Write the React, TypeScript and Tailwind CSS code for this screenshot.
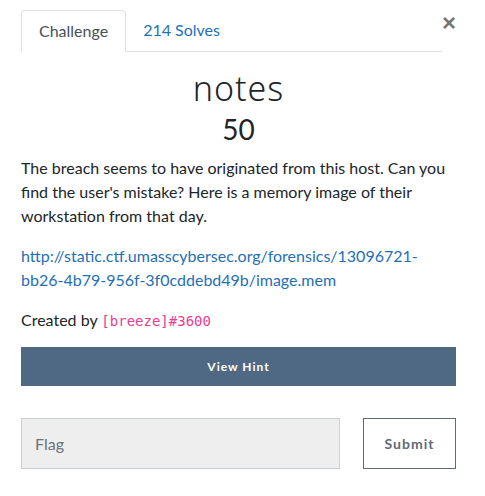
export default function App() {
  return (
    <div className="w-[485px] h-[496px] bg-white font-['Lato','Liberation_Sans',sans-serif] text-[#212529]">
      <div className="pl-[21px] pr-[29px] pt-[10px]">
        <div className="flex items-start">
          <div className="flex w-[421px] border-b border-[#dee2e6]">
            <div className="-mb-px border border-b-white border-[#dee2e6] rounded-t-[4px] bg-white px-[17px] py-[8px] text-[16px] leading-6 text-[#495057]">
              Challenge
            </div>
            <div className="px-[17px] py-[8px] text-[16px] leading-6 text-[#1f6fb5]">
              214 Solves
            </div>
          </div>
          <div className="ml-auto mt-[3px] text-[24px] leading-5 font-bold text-[#777] font-['Liberation_Sans',sans-serif]">
            ×
          </div>
        </div>

        <div>
          <h3 className="mt-[16px] text-center text-[34px] leading-[41px] font-light tracking-[1px] font-['Noto_Sans',sans-serif] text-[#212529]">
            notes
          </h3>
          <h4 className="mt-[3px] text-center text-[28px] leading-[34px] font-normal text-[#212529]">
            50
          </h4>
          <p className="mt-[10px] text-[16px] leading-6">
            The breach seems to have originated from this host. Can you find
            the user's mistake? Here is a memory image of their workstation
            from that day.
          </p>
          <p className="mt-4 text-[16px] leading-6">
            <a className="text-[#1f6fb5]">
              http://static.ctf.umasscybersec.org/forensics/13096721-bb26-4b79-956f-3f0cddebd49b/image.mem
            </a>
          </p>
          <p className="mt-4 text-[16px] leading-6">
            Created by{" "}
            <code className="font-['DejaVu_Sans_Mono',monospace] text-[14px] text-[#e83e8c]">
              [breeze]#3600
            </code>
          </p>
          <button className="mt-[14px] w-full h-[39px] bg-[#4f6883] text-white text-[12px] font-bold tracking-[1px]">
            View Hint
          </button>
          <div className="mt-[32px] flex gap-[23px]">
            <div className="flex-1 h-[51px] border border-[#c8cfd6] bg-[#eeeeee] px-[13px] flex items-center text-[16px] text-[#6b737b]">
              Flag
            </div>
            <button className="w-[93px] h-[51px] border border-[#5f6b76] text-[#5f6b76] text-[14px] font-bold tracking-[1px]">
              Submit
            </button>
          </div>
        </div>
      </div>
    </div>
  );
}
